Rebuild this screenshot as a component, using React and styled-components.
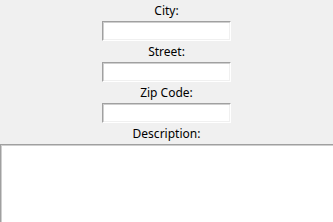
import React from "react";
import styled, { createGlobalStyle } from "styled-components";

const Global = createGlobalStyle`
  html, body { margin: 0; padding: 0; background: #f0f0f0; overflow: hidden; }
  body { font-family: "Segoe UI", "Noto Sans", "Open Sans", sans-serif; }
`;

const Form = styled.div`
  width: 333px;
  height: 222px;
  display: flex;
  flex-direction: column;
  align-items: center;
  background: #f0f0f0;
  overflow: hidden;
`;

const Label = styled.div`
  height: 21px;
  flex: none;
  display: flex;
  align-items: center;
  justify-content: center;
  font-size: 12px;
  color: #000;
  padding-top: 1px;
  box-sizing: border-box;
  line-height: 1;
`;

const sunken = `
  box-sizing: border-box;
  background: #fff;
  border-style: solid;
  border-width: 1px;
  border-color: #a0a0a0 #ffffff #ffffff #a0a0a0;
  box-shadow: inset 1px 1px 0 #cfcfcf, inset -1px -1px 0 #f0f0f0;
  outline: none;
  font-family: inherit;
  font-size: 12px;
  padding: 2px 3px;
  margin: 0;
`;

const TextBox = styled.input`
  ${sunken}
  flex: none;
  width: 129px;
  height: 20px;
`;

const TextArea = styled.textarea`
  ${sunken}
  flex: none;
  align-self: flex-start;
  width: 340px;
  height: 100px;
  resize: none;
  overflow: hidden;
`;

export default function App() {
  return (
    <>
      <Global />
      <Form>
        <Label>City:</Label>
        <TextBox />
        <Label>Street:</Label>
        <TextBox />
        <Label>Zip Code:</Label>
        <TextBox />
        <Label>Description:</Label>
        <TextArea />
      </Form>
    </>
  );
}
